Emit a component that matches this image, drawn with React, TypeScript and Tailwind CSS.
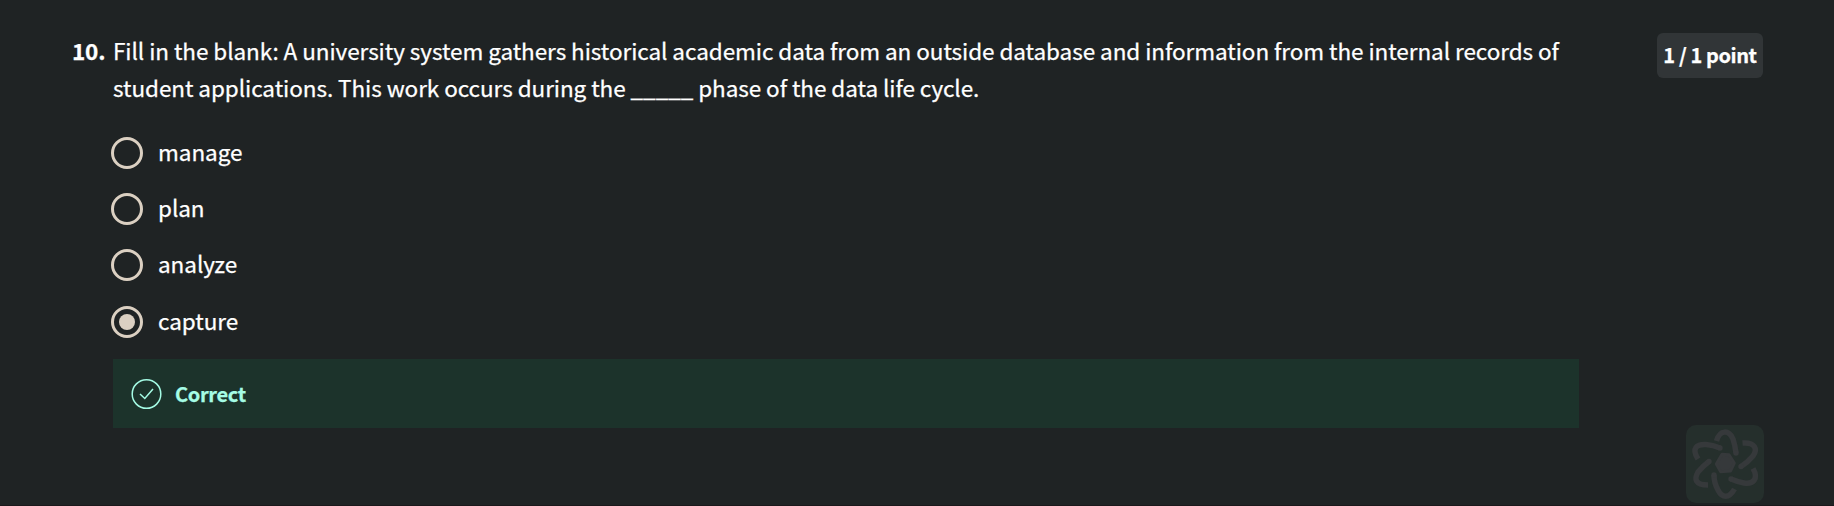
const options = ["manage", "plan", "analyze", "capture"];
const rowGaps = ["", "mt-[24px]", "mt-[24px]", "mt-[25px]"];

function Radio({ checked }: { checked: boolean }) {
  return (
    <span className="flex h-8 w-8 shrink-0 items-center justify-center rounded-full border-[3px] border-[#dbd0c2]">
      {checked && <span className="h-4 w-4 rounded-full bg-[#dbd0c2]" />}
    </span>
  );
}

function AssistantLogo() {
  return (
    <svg viewBox="0 0 78 78" className="h-[78px] w-[78px]" fill="none" stroke="#36393b" strokeWidth="5.5">
      <polygon
        points="36,29.3 43,29.8 48.3,38 44.500,46 34.700,46.800 30.300,39"
        fill="#36393b"
        strokeWidth="3"
        strokeLinejoin="round"
      />
      <path d="M30.500 16 C34 4 43 5 47 14 Q49 20 50 28" />
      <circle cx="50" cy="28" r="2.7" fill="#36393b" stroke="none" />
      <path d="M56.500 18 C69 17 72 24 67 31 Q62 37 55 41.500" />
      <circle cx="55" cy="41.500" r="2.700" fill="#36393b" stroke="none" />
      <path d="M67 43.500 C73 54 67 59.500 58 58 Q52 57 45 54" />
      <circle cx="45" cy="54" r="2.700" fill="#36393b" stroke="none" />
      <path d="M48.500 64 C43 74 36 73 32 65 Q28 58 28 50" />
      <circle cx="28" cy="50" r="2.700" fill="#36393b" stroke="none" />
      <path d="M22 60 C9 60 8 54 12 47 Q17 41 23 36.500" />
      <circle cx="23" cy="36.500" r="2.700" fill="#36393b" stroke="none" />
      <path d="M12 34 C5 23 11 19 20 19.500 Q27 20 34 23" />
      <circle cx="34" cy="23" r="2.700" fill="#36393b" stroke="none" />
    </svg>
  );
}

export default function App() {
  return (
    <div className="relative flex h-[506px] w-full overflow-hidden border-b border-[#1b181b] bg-[#1f2324] pt-[32px] font-['Noto_Sans_CJK_SC','Noto_Sans',sans-serif] text-[22.5px] text-white [-webkit-text-stroke:0.25px_currentColor]">
      <div className="w-[113px] shrink-0 pl-[72px] font-bold leading-[37px] tracking-[-0.2px]">10.</div>
      <main className="w-[1466px] shrink-0">
        <p className="whitespace-nowrap leading-[37px] tracking-[-0.06px]">
          Fill in the blank: A university system gathers historical academic data from an outside database and information from the internal records of
          <br />
          student applications. This work occurs during the _____ phase of the data life cycle.
        </p>
        <div className="-ml-[2px] mt-[31px]">
          {options.map((o, i) => (
            <label key={o} className={`flex h-8 items-center ${rowGaps[i]}`}>
              <Radio checked={o === "capture"} />
              <span className="mb-1 ml-[15px] leading-[30px] tracking-[-0.06px]">{o}</span>
            </label>
          ))}
        </div>
        <div className="mt-[21px] flex h-[69px] items-center bg-[#1c332b] pl-[18px] text-[#a5fce5]">
          <svg viewBox="0 0 32 32" className="h-8 w-8" fill="none" stroke="currentColor" strokeWidth="1.500">
            <circle cx="15.500" cy="16" r="14.300" />
            <path d="M9 16 L13.800 20.500 L22 11" />
          </svg>
          <span className="ml-[12px] text-[20px] font-bold tracking-[-0.35px]">Correct</span>
        </div>
      </main>
      <div className="ml-[78px] mt-[1px] flex h-[45px] w-[106px] items-center justify-center whitespace-nowrap rounded-md bg-[#313537] pb-[2px] text-[20px] font-bold tracking-[-0.4px]">
        1 / 1 point
      </div>
      <div className="absolute left-[1686px] top-[425px] rounded-[10px] bg-[#252f2c]">
        <AssistantLogo />
      </div>
    </div>
  );
}
